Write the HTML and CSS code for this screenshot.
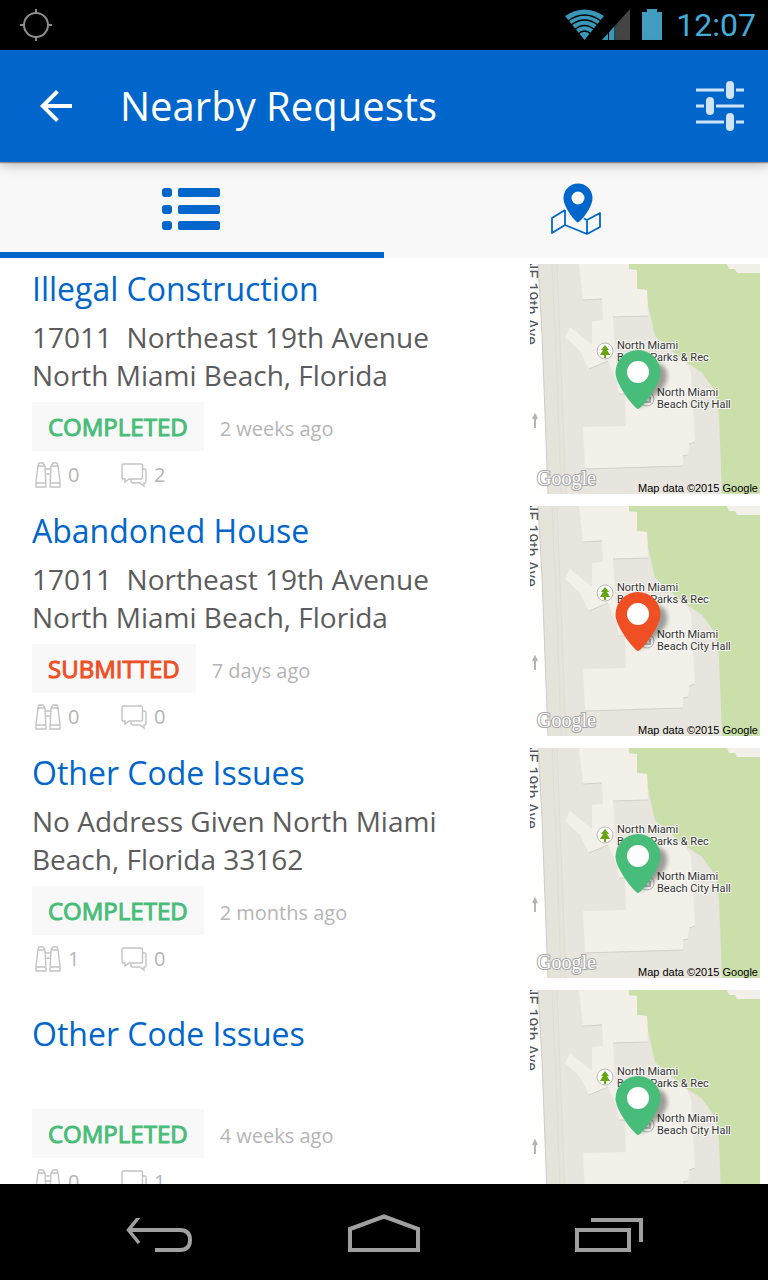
FILE: index.html
```html
<!DOCTYPE html>
<html lang="en">
<head>
<meta charset="utf-8">
<meta name="viewport" content="width=device-width, initial-scale=1">
<title>Nearby Requests</title>
<link rel="stylesheet" href="styles.css">
</head>
<body>
<svg class="sprite" aria-hidden="true">
  <defs>
    <filter id="blur" x="-50%" y="-50%" width="200%" height="200%"><feGaussianBlur stdDeviation="2"/></filter>
    <symbol id="terrain" viewBox="0 0 230 230">
      <rect width="230" height="230" fill="#e8e5de"/>
      <path d="M0 0H8L12 70L18 230H0Z" fill="#fefefd"/>
      <path d="M8 0L12 70L18 230H36L27 0Z" fill="#e5e3da"/>
      <path d="M8 0L12 70L18 230" fill="none" stroke="#cfcdc4"/>
      <path d="M22 0L27 110L31 230M27 0L36 230" fill="none" stroke="#e0ddd5"/>
      <path d="M98 0H230V230H192L189 151L185 127L172 109L157 99L125 72L118 41L117 26L107 25L107 6L99 5Z" fill="#cadfaa"/>
      <path d="M197 0L199 5L205 5L207 9L230 9V0Z" fill="#f2f0e9"/>
      <path d="M118 52L125 72L134 99L157 99L172 109L185 127L150 130L110 90Z" fill="#e8e5de"/>
      <path d="M49 0H99L99 6H107V25L117 26L118 52L83 53L86 97H155L161 108L165 178L159 180L158 191L153 192V202L55 205L53 163L96 162L95 130H89L87 117L78 97L59 105L50 87L35 73L40 63L62 81V57L73 56L72 35L53 36Z" fill="#f2f0e9"/>
      <path d="M53 36L72 35M83 53L118 52M59 105L78 97M55 205L153 202M159 180L165 178M153 192L158 191M89 130H95" fill="none" stroke="#d3d0cd"/>
      <path d="M5 164V152M3 155L5 151L7 155" fill="none" stroke="#b5b5b5" stroke-width="2"/>
      <circle cx="75" cy="87" r="8" fill="#fff" stroke="#b9b9b9"/>
      <path d="M75 81L79 86H77L80 91H76V94H74V91H70L73 86H71Z" fill="#68a611"/>
      <circle cx="117" cy="135" r="7" fill="#f4f4f2" stroke="#aaa"/>
      <path d="M114 137V133M120 137V133M113 138H121" stroke="#777"/>
    </symbol>
    <symbol id="pin" viewBox="0 0 230 230">
      <path d="M110 144C118 136 134 128 137 115C139 105 132 98 124 99L106 120Z" fill="#000" opacity=".35" filter="url(#blur)"/>
      <path fill="currentColor" d="M108 145C105 145 85.500 121 85.500 108.500A22.500 22.500 0 0 1 130.500 108.500C130.500 121 111 145 108 145Z"/>
      <circle cx="108" cy="108" r="11" fill="#fff"/>
    </symbol>
    <symbol id="binoculars" viewBox="0 0 26 26">
      <path d="M3 4L4 1H8L10 4L11 25H1V20ZM23 4L22 1H18L16 4L15 25H25V20ZM3 4H10M16 4H23M1 21H11M15 21H25M10 7H16M10 12H16" fill="none" stroke="#c4c4c4" stroke-width="1.400"/>
    </symbol>
    <symbol id="comments" viewBox="0 0 26 26">
      <path d="M2 2H20Q21.500 2 21.500 3.500V15Q21.500 17 20 17H8L4 20V17H2Q1 17 1 15V3.500Q1 2 2 2ZM22 7H24Q25 7 25 9V19Q25 21 24 21H23V24L19 21H12Q10 21 10 19V17" fill="none" stroke="#c4c4c4" stroke-width="1.400"/>
    </symbol>
  </defs>
</svg>

<div class="screen">
  <div class="status">
    <svg class="gps" width="32" height="32" viewBox="0 0 32 32" fill="none" stroke="#8d8d8d" stroke-width="2"><circle cx="16" cy="16" r="12"/><path d="M16 0V5M16 27V32M0 16H5M27 16H32"/></svg>
    <svg width="65" height="32" viewBox="0 0 65 32">
      <path d="M0 7Q19.500 -6 39 7L19.500 31Z" fill="#3a97b8"/>
      <g fill="none" stroke="#000" stroke-width="1.300"><path d="M3 12Q19.500 0 36 12M6 16Q19.500 6 33 16M9 21Q19.500 12 30 21M13 25Q19.500 19 26 25"/></g>
      <path d="M37 31L51 15.500V31Z" fill="#3a97b8"/><path d="M51 15.500L65 0V31H51Z" fill="#444"/>
      <path d="M43.500 20V31M50 14V31" stroke="#000"/>
    </svg>
    <svg class="battery" width="20" height="32" viewBox="0 0 20 32"><path d="M5 0H15V3H20V31H0V3H5Z" fill="#419dc0"/></svg>
    <time class="clock">12:07</time>
  </div>

  <header class="appbar">
    <button class="icon-btn" type="button" aria-label="Back"><svg width="32" height="32" viewBox="4 4 16 16" fill="#fff"><path d="M20 11H7.830l5.590-5.590L12 4l-8 8 8 8 1.410-1.410L7.830 13H20v-2z"/></svg></button>
    <h1 class="appbar-title">Nearby Requests</h1>
    <button class="icon-btn" type="button" aria-label="Filter"><svg width="50" height="52" viewBox="0 0 50 52" fill="#cfe3f7"><path d="M1 8.500H29V11.500H1ZM41 8.500H49V11.500H41ZM1 24.500H9V27.500H1ZM21 24.500H49V27.500H21ZM1 40.500H29V43.500H1ZM41 40.500H49V43.500H41Z"/><rect x="31" y="1" width="8" height="18" rx="4"/><rect x="11" y="17" width="8" height="18" rx="4"/><rect x="31" y="33" width="8" height="18" rx="4"/></svg></button>
  </header>

  <nav class="tabs">
    <button class="tab tab-active" type="button" aria-label="List"><svg width="60" height="42" viewBox="0 0 60 42" fill="#06c"><rect width="10" height="9" rx="3"/><rect x="16" width="42" height="9" rx="2"/><rect y="17" width="10" height="9" rx="3"/><rect x="16" y="17" width="42" height="9" rx="2"/><rect y="33" width="10" height="9" rx="3"/><rect x="16" y="33" width="42" height="9" rx="2"/></svg></button>
    <button class="tab" type="button" aria-label="Map"><svg width="50" height="52" viewBox="0 0 50 52"><path d="M14 27L1 35V50L14 42L36 51V37L49 30V44L36 51M14 27V42M32 35L36 37" fill="none" stroke="#06c" stroke-width="1.800" stroke-linejoin="round"/><path d="M27 39.500C25 39.500 12.500 25 12.500 15A14.500 14.500 0 0 1 41.500 15C41.500 25 29 39.500 27 39.500ZM27 8.500A6.500 6.500 0 1 0 27 21.500A6.500 6.500 0 1 0 27 8.500Z" fill="#06c" fill-rule="evenodd" stroke="#f8f8f8" stroke-width="2" paint-order="stroke"/></svg></button>
  </nav>

  <main class="list">
    <article class="item">
      <div class="info">
        <h2 class="title"><a href="#">Illegal Construction</a></h2>
        <p class="address">17011  Northeast 19th Avenue North Miami Beach, Florida</p>
        <div class="state"><span class="badge done">COMPLETED</span><span class="age">2 weeks ago</span></div>
        <div class="stats"><span class="stat"><svg class="stat-icon"><use href="#binoculars"/></svg>0</span><span class="stat"><svg class="stat-icon"><use href="#comments"/></svg>2</span></div>
      </div>
      <svg class="map" viewBox="0 0 230 230">
        <use href="#terrain"/>
        <text class="road" transform="translate(-4 -6) rotate(90)">NE 19th Ave</text>
        <text class="place" x="87" y="85">North Miami</text><text class="place" x="87" y="97">Beach Parks &amp; Rec</text>
        <text class="place" x="127" y="132">North Miami</text><text class="place" x="127" y="144">Beach City Hall</text>
        <text class="brand" x="7" y="221">Google</text><text class="credit" x="228" y="228">Map data ©2015 Google</text>
        <use class="done" href="#pin"/>
      </svg>
    </article>
    <article class="item">
      <div class="info">
        <h2 class="title"><a href="#">Abandoned House</a></h2>
        <p class="address">17011  Northeast 19th Avenue North Miami Beach, Florida</p>
        <div class="state"><span class="badge open">SUBMITTED</span><span class="age">7 days ago</span></div>
        <div class="stats"><span class="stat"><svg class="stat-icon"><use href="#binoculars"/></svg>0</span><span class="stat"><svg class="stat-icon"><use href="#comments"/></svg>0</span></div>
      </div>
      <svg class="map" viewBox="0 0 230 230">
        <use href="#terrain"/>
        <text class="road" transform="translate(-4 -6) rotate(90)">NE 19th Ave</text>
        <text class="place" x="87" y="85">North Miami</text><text class="place" x="87" y="97">Beach Parks &amp; Rec</text>
        <text class="place" x="127" y="132">North Miami</text><text class="place" x="127" y="144">Beach City Hall</text>
        <text class="brand" x="7" y="221">Google</text><text class="credit" x="228" y="228">Map data ©2015 Google</text>
        <use class="open" href="#pin"/>
      </svg>
    </article>
    <article class="item">
      <div class="info">
        <h2 class="title"><a href="#">Other Code Issues</a></h2>
        <p class="address">No Address Given North Miami Beach, Florida 33162</p>
        <div class="state"><span class="badge done">COMPLETED</span><span class="age">2 months ago</span></div>
        <div class="stats"><span class="stat"><svg class="stat-icon"><use href="#binoculars"/></svg>1</span><span class="stat"><svg class="stat-icon"><use href="#comments"/></svg>0</span></div>
      </div>
      <svg class="map" viewBox="0 0 230 230">
        <use href="#terrain"/>
        <text class="road" transform="translate(-4 -6) rotate(90)">NE 19th Ave</text>
        <text class="place" x="87" y="85">North Miami</text><text class="place" x="87" y="97">Beach Parks &amp; Rec</text>
        <text class="place" x="127" y="132">North Miami</text><text class="place" x="127" y="144">Beach City Hall</text>
        <text class="brand" x="7" y="221">Google</text><text class="credit" x="228" y="228">Map data ©2015 Google</text>
        <use class="done" href="#pin"/>
      </svg>
    </article>
    <article class="item">
      <div class="info">
        <h2 class="title"><a href="#">Other Code Issues</a></h2>
        <p class="address"></p>
        <div class="state"><span class="badge done">COMPLETED</span><span class="age">4 weeks ago</span></div>
        <div class="stats"><span class="stat"><svg class="stat-icon"><use href="#binoculars"/></svg>0</span><span class="stat"><svg class="stat-icon"><use href="#comments"/></svg>1</span></div>
      </div>
      <svg class="map" viewBox="0 0 230 230">
        <use href="#terrain"/>
        <text class="road" transform="translate(-4 -6) rotate(90)">NE 19th Ave</text>
        <text class="place" x="87" y="85">North Miami</text><text class="place" x="87" y="97">Beach Parks &amp; Rec</text>
        <text class="place" x="127" y="132">North Miami</text><text class="place" x="127" y="144">Beach City Hall</text>
        <use class="done" href="#pin"/>
      </svg>
    </article>
  </main>

  <nav class="navbar">
    <button class="nav-btn" type="button" aria-label="Back"><svg width="66" height="34" viewBox="0 0 66 34" fill="none" stroke="#a0a0a0" stroke-width="4"><path d="M3 12H54Q64 12 64 22Q64 32 54 32H29"/><path d="M13 -1L2.500 12L13 25" stroke-width="3.500"/></svg></button>
    <button class="nav-btn" type="button" aria-label="Home"><svg width="72" height="38" viewBox="0 0 72 38" fill="none" stroke="#a0a0a0" stroke-width="4"><path d="M2 15L36 2.500L70 15V36H2Z"/></svg></button>
    <button class="nav-btn" type="button" aria-label="Recent apps"><svg width="68" height="34" viewBox="0 0 68 34" fill="none" stroke="#a0a0a0" stroke-width="4"><path d="M2 12H54V32H2ZM16 2H66V24"/></svg></button>
  </nav>
</div>
</body>
</html>
```
FILE: styles.css
```css
* { box-sizing: border-box; }

body {
  margin: 0;
  font-family: "Open Sans", "Noto Sans", sans-serif;
  background: #fff;
}

button {
  margin: 0;
  padding: 0;
  border: 0;
  background: none;
  cursor: pointer;
}

svg { display: block; flex: none; }

.sprite { position: absolute; width: 0; height: 0; }

.screen {
  display: flex;
  flex-direction: column;
  height: 100vh;
  overflow: hidden;
}

.status {
  flex: none;
  display: flex;
  align-items: center;
  height: 50px;
  padding: 0 12px 0 20px;
  background: #000;
}

.gps { margin-right: auto; }
.battery { margin: 0 14px 0 12px; }

.clock {
  font: 32px/50px Roboto, sans-serif;
  color: #40addb;
}

.appbar {
  position: relative;
  z-index: 1;
  flex: none;
  display: flex;
  align-items: center;
  gap: 48px;
  height: 112px;
  padding: 0 23px 0 40px;
  background: #06c;
  box-shadow: 0 1px 1px rgba(0, 0, 0, .35), 0 2px 12px rgba(0, 0, 0, .3);
}

.appbar-title {
  flex: 1;
  margin: 0;
  padding-bottom: 2px;
  font-size: 40px;
  font-weight: 400;
  color: #fff;
}

.tabs {
  flex: none;
  display: flex;
  height: 96px;
  background: #f8f8f8;
}

.tab {
  flex: 1;
  display: flex;
  align-items: center;
  justify-content: center;
  padding-top: 4px;
  border-bottom: 6px solid transparent;
}

.tab-active { border-color: #06c; }

.list {
  flex: 1;
  min-height: 0;
  overflow: hidden;
}

.item {
  display: flex;
  align-items: center;
  gap: 32px;
  padding: 6px 8px 6px 32px;
}

.info {
  flex: 1;
  display: flex;
  flex-direction: column;
  gap: 8px;
}

.title {
  margin: 0;
  font-size: 32px;
  line-height: 42px;
  font-weight: 400;
}

.title a { color: #06c; text-decoration: none; }

.address {
  min-height: 38px;
  margin: 0;
  font-size: 28px;
  line-height: 38px;
  white-space: pre-wrap;
  color: #5c5c5c;
}

.state {
  display: flex;
  align-items: center;
  gap: 16px;
}

.badge {
  padding: 8px 16px;
  background: #f8f8f8;
  font-size: 24px;
  line-height: 33px;
  -webkit-text-stroke: 1px currentColor;
}

.done { color: #48bd79; }
.open { color: #f04e23; }

.age {
  padding-top: 6px;
  font-size: 20px;
  line-height: 28px;
  color: #b5b5b5;
}

.stats {
  display: flex;
  padding-left: 3px;
}

.stat {
  display: flex;
  align-items: center;
  gap: 7px;
  min-width: 86px;
  font-size: 20px;
  line-height: 32px;
  color: #b5b5b5;
}

.stat-icon { width: 26px; height: 26px; }

.map {
  width: 230px;
  height: 230px;
  overflow: hidden;
}

.road { font: 16px Roboto, sans-serif; fill: #555; }

.place {
  font: 11px Roboto, sans-serif;
  fill: #333;
  stroke: #f8f8f4;
  stroke-width: 2px;
  paint-order: stroke;
}

.brand {
  font: 20px "Liberation Serif", serif;
  fill: #fff;
  stroke: #a5a5a5;
  stroke-width: 2px;
  paint-order: stroke;
}

.credit {
  font: 11px "Liberation Sans", sans-serif;
  text-anchor: end;
  fill: #000;
}

.navbar {
  flex: none;
  display: flex;
  height: 96px;
  padding: 0 47px 28px;
  background: #000;
}

.nav-btn {
  flex: 1;
  display: flex;
  align-items: flex-end;
  justify-content: center;
}
```
